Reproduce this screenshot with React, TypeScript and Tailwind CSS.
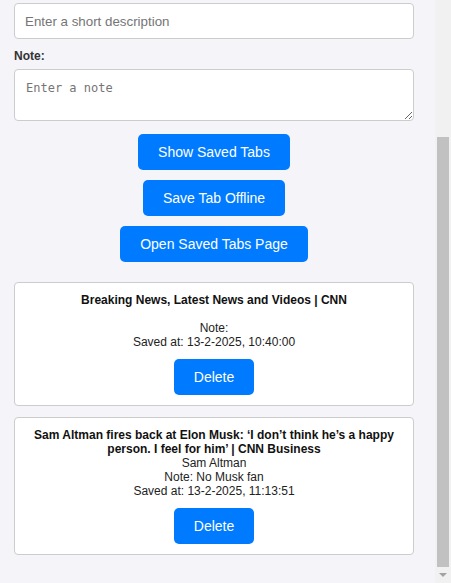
import React from "react";

const font = { fontFamily: '"Liberation Sans", Arial, sans-serif' };

function Card({ title, desc, note, saved }: { title: string; desc: string; note: string; saved: string }) {
  return (
    <div className="w-[400px] rounded-[4px] border border-[#cccccc] bg-white px-[10px] pt-[10px] pb-[10px] text-center text-[12px] leading-[14px] text-[#222]">
      <div className="font-bold text-[#111]">{title}</div>
      <div className="h-[14px]">{desc}</div>
      <div>Note: {note}</div>
      <div>Saved at: {saved}</div>
      <button className="mt-[10px] h-[36px] w-[80px] rounded-[5px] bg-[#007bff] text-[14px] text-white">Delete</button>
    </div>
  );
}

export default function App() {
  return (
    <div className="flex h-[583px] w-[451px] overflow-hidden" style={font}>
      <div className="w-[435px] bg-[#f4f4f9] pl-[14px] pt-[3px]">
        <input
          className="block h-[36px] w-[400px] rounded-[4px] border border-[#cccccc] bg-white px-[10px] text-[13.33px] text-[#222] placeholder:text-[#757575] outline-none"
          placeholder="Enter a short description"
        />
        <div className="mt-[10px] h-[14px] text-[12px] font-bold leading-[14px] text-[#333]">Note:</div>
        <textarea
          className="mt-[6px] block h-[52px] w-[400px] rounded-[4px] border border-[#cccccc] bg-white px-[11px] py-[10px] text-[12px] leading-[16px] placeholder:text-[#757575] outline-none"
          style={{ fontFamily: '"DejaVu Sans Mono", monospace' }}
          placeholder="Enter a note"
        />
        <div className="mt-[13px] flex w-[400px] flex-col items-center gap-[10px]">
          <button className="h-[36px] rounded-[5px] bg-[#007bff] px-[20px] text-[14px] text-white">Show Saved Tabs</button>
          <button className="h-[36px] rounded-[5px] bg-[#007bff] px-[20px] text-[14px] text-white">Save Tab Offline</button>
          <button className="h-[36px] rounded-[5px] bg-[#007bff] px-[20px] text-[14px] text-white">Open Saved Tabs Page</button>
        </div>
        <div className="mt-[20px] flex flex-col gap-[11px]">
          <Card title="Breaking News, Latest News and Videos | CNN" desc="" note="" saved="13-2-2025, 10:40:00" />
          <Card
            title="Sam Altman fires back at Elon Musk: ‘I don’t think he’s a happy person. I feel for him’ | CNN Business"
            desc="Sam Altman"
            note="No Musk fan"
            saved="13-2-2025, 11:13:51"
          />
        </div>
      </div>
      <div className="flex w-[16px] flex-col bg-[#f1f1f1]">
        <div className="h-[137px]" />
        <div className="ml-[2px] h-[430px] w-[12px] bg-[#c1c1c1]" />
        <div className="flex flex-1 items-center justify-center">
          <svg width="8" height="5" viewBox="0 0 8 5">
            <polygon points="0,0 8,0 4,4" fill="#a3a3a3" />
          </svg>
        </div>
      </div>
    </div>
  );
}
